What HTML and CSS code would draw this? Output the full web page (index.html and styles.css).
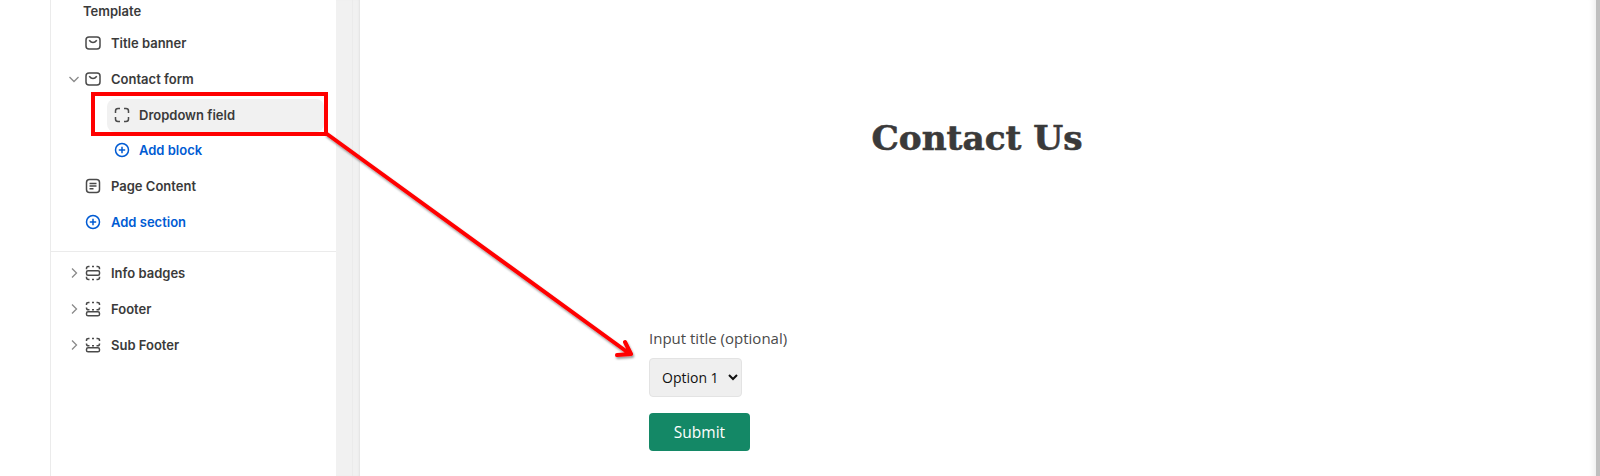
FILE: index.html
```html
<!DOCTYPE html>
<html lang="en">

<head>
  <meta charset="UTF-8">
  <title>Contact form</title>
  <link rel="stylesheet" href="styles.css">
</head>

<body>
  <div class="page">
    <div class="gutter"></div>
    <aside class="sidebar">
      <div class="group">
        <div class="heading">Template</div>
        <div class="row">
          <span class="chev"></span>
          <svg class="icon" viewBox="0 0 16 16"><rect x="1" y="2" width="14" height="12" rx="3"/><path d="M4.2 5.2 Q8 9.8 11.8 5.2"/></svg>
          <span>Title banner</span>
        </div>
        <div class="row">
          <svg class="chev" viewBox="0 0 12 12"><path d="M1.5 4 L6 8.5 L10.5 4"/></svg>
          <svg class="icon" viewBox="0 0 16 16"><rect x="1" y="2" width="14" height="12" rx="3"/><path d="M4.2 5.2 Q8 9.8 11.8 5.2"/></svg>
          <span>Contact form</span>
        </div>
        <div class="row sub active">
          <svg class="icon" viewBox="0 0 16 16"><path d="M1.5 6 V4 Q1.5 1.5 4 1.5 H6 M10 1.5 H12 Q14.5 1.5 14.5 4 V6 M14.5 10 V12 Q14.5 14.5 12 14.5 H10 M6 14.5 H4 Q1.5 14.5 1.5 12 V10"/></svg>
          <span>Dropdown field</span>
        </div>
        <div class="row sub link">
          <svg class="icon" viewBox="0 0 16 16"><circle cx="8" cy="8" r="6.5"/><path d="M8 4.8 V11.2 M4.8 8 H11.2"/></svg>
          <span>Add block</span>
        </div>
        <div class="row">
          <span class="chev"></span>
          <svg class="icon" viewBox="0 0 16 16"><rect x="1.5" y="1.5" width="13" height="13" rx="3"/><path d="M4.5 5.5 H11.5 M4.5 8 H11.5 M4.5 10.8 H8.5"/></svg>
          <span>Page Content</span>
        </div>
        <div class="row link">
          <span class="chev"></span>
          <svg class="icon" viewBox="0 0 16 16"><circle cx="8" cy="8" r="6.5"/><path d="M8 4.8 V11.2 M4.8 8 H11.2"/></svg>
          <span>Add section</span>
        </div>
      </div>
      <div class="group second">
        <div class="row">
          <svg class="chev" viewBox="0 0 12 12"><path d="M4 1.5 L8.5 6 L4 10.5"/></svg>
          <svg class="icon" viewBox="0 0 16 16"><path d="M1.5 4.2 V3.5 Q1.5 1.5 3.5 1.5 H4.5 M7 1.5 H9 M11.5 1.5 H12.5 Q14.5 1.5 14.5 3.5 V4.2 M1.5 11.8 V12.5 Q1.5 14.5 3.5 14.5 H4.5 M7 14.5 H9 M11.5 14.5 H12.5 Q14.5 14.5 14.5 12.5 V11.8"/><rect x="1.5" y="5.8" width="13" height="4.4" rx="1.5"/></svg>
          <span>Info badges</span>
        </div>
        <div class="row">
          <svg class="chev" viewBox="0 0 12 12"><path d="M4 1.5 L8.5 6 L4 10.5"/></svg>
          <svg class="icon" viewBox="0 0 16 16"><path d="M1.5 4 V3.2 Q1.5 1.5 3.5 1.5 H4.5 M7 1.5 H9 M11.5 1.5 H12.5 Q14.5 1.5 14.5 3.2 V4 M1.5 6.5 V7 Q1.5 8.8 3.5 8.8 H4.5 M14.5 6.5 V7 Q14.5 8.8 12.5 8.8 H11.5 M7 8.8 H9"/><rect x="1.5" y="10.8" width="13" height="4" rx="1.6"/></svg>
          <span>Footer</span>
        </div>
        <div class="row">
          <svg class="chev" viewBox="0 0 12 12"><path d="M4 1.5 L8.5 6 L4 10.5"/></svg>
          <svg class="icon" viewBox="0 0 16 16"><path d="M1.5 4 V3.2 Q1.5 1.5 3.5 1.5 H4.5 M7 1.5 H9 M11.5 1.5 H12.5 Q14.5 1.5 14.5 3.2 V4 M1.5 6.5 V7 Q1.5 8.8 3.5 8.8 H4.5 M14.5 6.5 V7 Q14.5 8.8 12.5 8.8 H11.5 M7 8.8 H9"/><rect x="1.5" y="10.8" width="13" height="4" rx="1.6"/></svg>
          <span>Sub Footer</span>
        </div>
      </div>
    </aside>
    <div class="rail"></div>
    <main class="preview">
      <h1>Contact Us</h1>
      <form class="form">
        <label for="field">Input title (optional)</label>
        <select id="field">
          <option>Option 1</option>
        </select>
        <button type="button">Submit</button>
      </form>
    </main>
    <div class="scrollbar"></div>
  </div>

  <!-- red markup drawn over the screenshot -->
  <div class="callout"></div>
  <svg class="arrow" viewBox="0 0 1600 476">
    <defs>
      <filter id="soft" x="-10%" y="-10%" width="120%" height="120%">
        <feDropShadow dx="1" dy="2" stdDeviation="1.2" flood-color="#000" flood-opacity="0.4"/>
      </filter>
    </defs>
    <path d="M327 134 L630 354 M625 342 L631 354 L617 355" filter="url(#soft)"/>
  </svg>
</body>

</html>
```

FILE: styles.css
```css
* {
  box-sizing: border-box;
}

html,
body {
  margin: 0;
  height: 100%;
  overflow: hidden;
  background-color: #fff;
}

.page {
  display: flex;
  height: 476px;
}

.gutter {
  width: 51px;
  border-right: 1px solid #ebebeb;
}

.sidebar {
  width: 285px;
  font-family: Inter, "Liberation Sans", sans-serif;
  font-size: 13px;
  font-weight: 600;
  color: #3a3a3a;
}

.group {
  padding-bottom: 11px;
  border-bottom: 1px solid #ebebeb;
}

.group.second {
  padding-top: 3px;
  border-bottom: 0;
}

.heading {
  height: 25px;
  line-height: 23px;
  padding-left: 32px;
}

.row {
  display: flex;
  align-items: center;
  height: 36px;
  padding-left: 17px;
}

.row .chev {
  width: 12px;
  height: 12px;
  margin-right: 5px;
  flex: none;
}

.chev path {
  fill: none;
  stroke: #8a8a8a;
  stroke-width: 1.3;
}

.icon {
  width: 16px;
  height: 16px;
  margin-right: 10px;
  flex: none;
  fill: none;
  stroke: #4a4a4a;
  stroke-width: 1.5;
}

.row.sub {
  height: 33px;
  margin: 1.5px 12px 1.5px 56px;
  padding-left: 7px;
  border-radius: 8px;
}

.row.sub .icon {
  margin-right: 9px;
}

.row.active {
  background-color: #f1f1f1;
}

.row.link {
  color: #005bd3;
}

.link .icon {
  stroke: #005bd3;
}

.rail {
  width: 24px;
  background-color: #f1f1f1;
  background-image: linear-gradient(to right, transparent 16px, #ebebeb 16px, #ebebeb 17px, transparent 17px);
  box-shadow: inset -2px 0 2px -1px #e2e2e2;
}

.preview {
  flex: 1;
  padding-left: 289px;
  font-family: "Open Sans", "Noto Sans", sans-serif;
  color: #3a3a3a;
  box-shadow: inset -8px 0 6px -6px #ececec;
}

.preview h1 {
  margin: 116px 291px 0 0;
  text-align: center;
  font-family: "DejaVu Serif", serif;
  font-size: 34.3px;
  line-height: 44px;
  font-weight: 700;
  -webkit-text-stroke: 0.6px #3a3a3a;
}

.form {
  display: flex;
  flex-direction: column;
  align-items: flex-start;
  margin-top: 167px;
}

.form label {
  font-size: 15px;
  line-height: 22px;
  color: #4a4a4a;
}

.form select {
  width: 93px;
  height: 39px;
  margin-top: 9px;
  padding: 0 4px 0 8px;
  border: 1px solid #e3e3e3;
  border-radius: 4px;
  background-color: #efefef;
  font-family: "Open Sans", sans-serif;
  font-size: 14px;
  color: #111;
}

.form button {
  width: 101px;
  height: 38px;
  margin-top: 16px;
  border: 0;
  border-radius: 4px;
  background-color: #148866;
  font-family: "Open Sans", sans-serif;
  font-size: 15.5px;
  color: #fff;
}

.scrollbar {
  width: 4px;
  background-color: #bfbfbf;
}

.callout {
  position: absolute;
  left: 91px;
  top: 92px;
  width: 237px;
  height: 44px;
  border: 4px solid #f00;
}

.arrow {
  position: absolute;
  left: 0;
  top: 0;
  width: 1600px;
  height: 476px;
  pointer-events: none;
}

.arrow path {
  fill: none;
  stroke: #f00;
  stroke-width: 4;
  stroke-linecap: round;
  stroke-linejoin: round;
}
```
